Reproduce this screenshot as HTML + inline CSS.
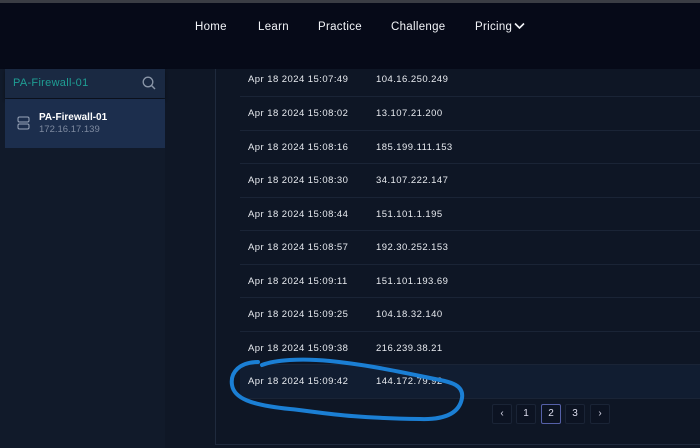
<!DOCTYPE html>
<html><head><style>
*{margin:0;padding:0;box-sizing:border-box}
body{width:700px;height:448px;overflow:hidden;background:#0e1625;font-family:"Liberation Sans",sans-serif;position:relative;color:#fff}
.top{position:absolute;left:0;top:0;width:700px;height:3px;background:#3a3d44}
.hdr{position:absolute;left:0;top:3px;width:700px;height:66px;background:#060a18}
.nav{position:absolute;top:21px;font-size:11.5px;color:#f2f4f8;letter-spacing:0.3px}
.side{position:absolute;left:0;top:69px;width:165px;height:379px;background:#111a2a}
.mid{position:absolute;left:165px;top:69px;width:50px;height:379px;background:#0f1726}
.panel{position:absolute;left:215px;top:69px;width:485px;height:376px;background:#0e1625;border-left:1px solid #1f2a3d;border-bottom:1px solid #1f2a3d}
.search{position:absolute;left:5px;top:69px;width:160px;height:29px;background:#1a2942;box-shadow:0 2px 3px rgba(0,0,0,.4)}
.search span{position:absolute;left:8px;top:8px;font-size:11px;color:#1f9e94;letter-spacing:0.3px}
.sel{position:absolute;left:5px;top:99px;width:160px;height:49px;background:#1c2e4d}
.row{position:absolute;left:240px;width:460px;height:33.5px;border-bottom:1px solid #1a2436;font-size:9.5px;color:#e8ebf0;letter-spacing:0.45px}
.row .d{position:absolute;left:8px;top:11px}
.row .i{position:absolute;left:136px;top:11px}
.pg{position:absolute;top:404px;width:20px;height:20px;border:1px solid #1a2436;border-radius:2px;background:#0c1322;font-size:10px;text-align:center;line-height:18px;color:#dde}
</style></head><body>
<div class="top"></div>
<div class="hdr"></div>
<div class="nav" style="left:195px">Home</div>
<div class="nav" style="left:258px">Learn</div>
<div class="nav" style="left:318px">Practice</div>
<div class="nav" style="left:391px">Challenge</div>
<div class="nav" style="left:475px">Pricing</div>
<svg style="position:absolute;left:514px;top:22px" width="11" height="8" viewBox="0 0 11 8"><path d="M1 1.5L5.5 6L10 1.5" stroke="#f2f4f8" stroke-width="1.6" fill="none"/></svg>
<div class="side"></div><div class="mid"></div><div class="panel"></div>
<div class="search"><span>PA-Firewall-01</span>
<svg style="position:absolute;left:137px;top:7px" width="14" height="14" viewBox="0 0 14 14"><circle cx="6" cy="6" r="4.8" stroke="#8a96a8" stroke-width="1.3" fill="none"/><path d="M9.5 9.5L13 13" stroke="#8a96a8" stroke-width="1.4"/></svg></div>
<div class="sel">
<svg style="position:absolute;left:12px;top:17px" width="13" height="14" viewBox="0 0 13 14"><rect x="1" y="1" width="11" height="5" rx="1.5" stroke="#9aa6ba" fill="none"/><rect x="1" y="8" width="11" height="5" rx="1.5" stroke="#9aa6ba" fill="none"/></svg>
<div style="position:absolute;left:34px;top:13px;font-size:10px;font-weight:bold">PA-Firewall-01</div>
<div style="position:absolute;left:34px;top:25px;font-size:9.5px;color:#7e8aa0">172.16.17.139</div></div>
<div class="row" style="top:63px"><span class="d">Apr 18 2024 15:07:49</span><span class="i">104.16.250.249</span></div>
<div class="row" style="top:97px"><span class="d">Apr 18 2024 15:08:02</span><span class="i">13.107.21.200</span></div>
<div class="row" style="top:130.5px"><span class="d">Apr 18 2024 15:08:16</span><span class="i">185.199.111.153</span></div>
<div class="row" style="top:164px"><span class="d">Apr 18 2024 15:08:30</span><span class="i">34.107.222.147</span></div>
<div class="row" style="top:197.5px"><span class="d">Apr 18 2024 15:08:44</span><span class="i">151.101.1.195</span></div>
<div class="row" style="top:231px"><span class="d">Apr 18 2024 15:08:57</span><span class="i">192.30.252.153</span></div>
<div class="row" style="top:264.5px"><span class="d">Apr 18 2024 15:09:11</span><span class="i">151.101.193.69</span></div>
<div class="row" style="top:298px"><span class="d">Apr 18 2024 15:09:25</span><span class="i">104.18.32.140</span></div>
<div class="row" style="top:331.5px"><span class="d">Apr 18 2024 15:09:38</span><span class="i">216.239.38.21</span></div>
<div class="row" style="top:365px;background:#111d31"><span class="d">Apr 18 2024 15:09:42</span><span class="i">144.172.79.92</span></div>
<div class="pg" style="left:492px">‹</div>
<div class="pg" style="left:516px">1</div>
<div class="pg" style="left:541px;border-color:#5560a8">2</div>
<div class="pg" style="left:565px">3</div>
<div class="pg" style="left:590px">›</div>
<svg style="position:absolute;left:0;top:0" width="700" height="448"><path d="M258 362C240 362 230 372 232 385C234 398 250 405 290 409C320 412 345 418 420 419C450 420 460 410 462 398C464 385 450 382 440 380C400 372 370 365 330 361C300 358 275 360 262 365" stroke="#1b7fd4" stroke-width="4" fill="none" stroke-linecap="round"/></svg>
</body></html>
